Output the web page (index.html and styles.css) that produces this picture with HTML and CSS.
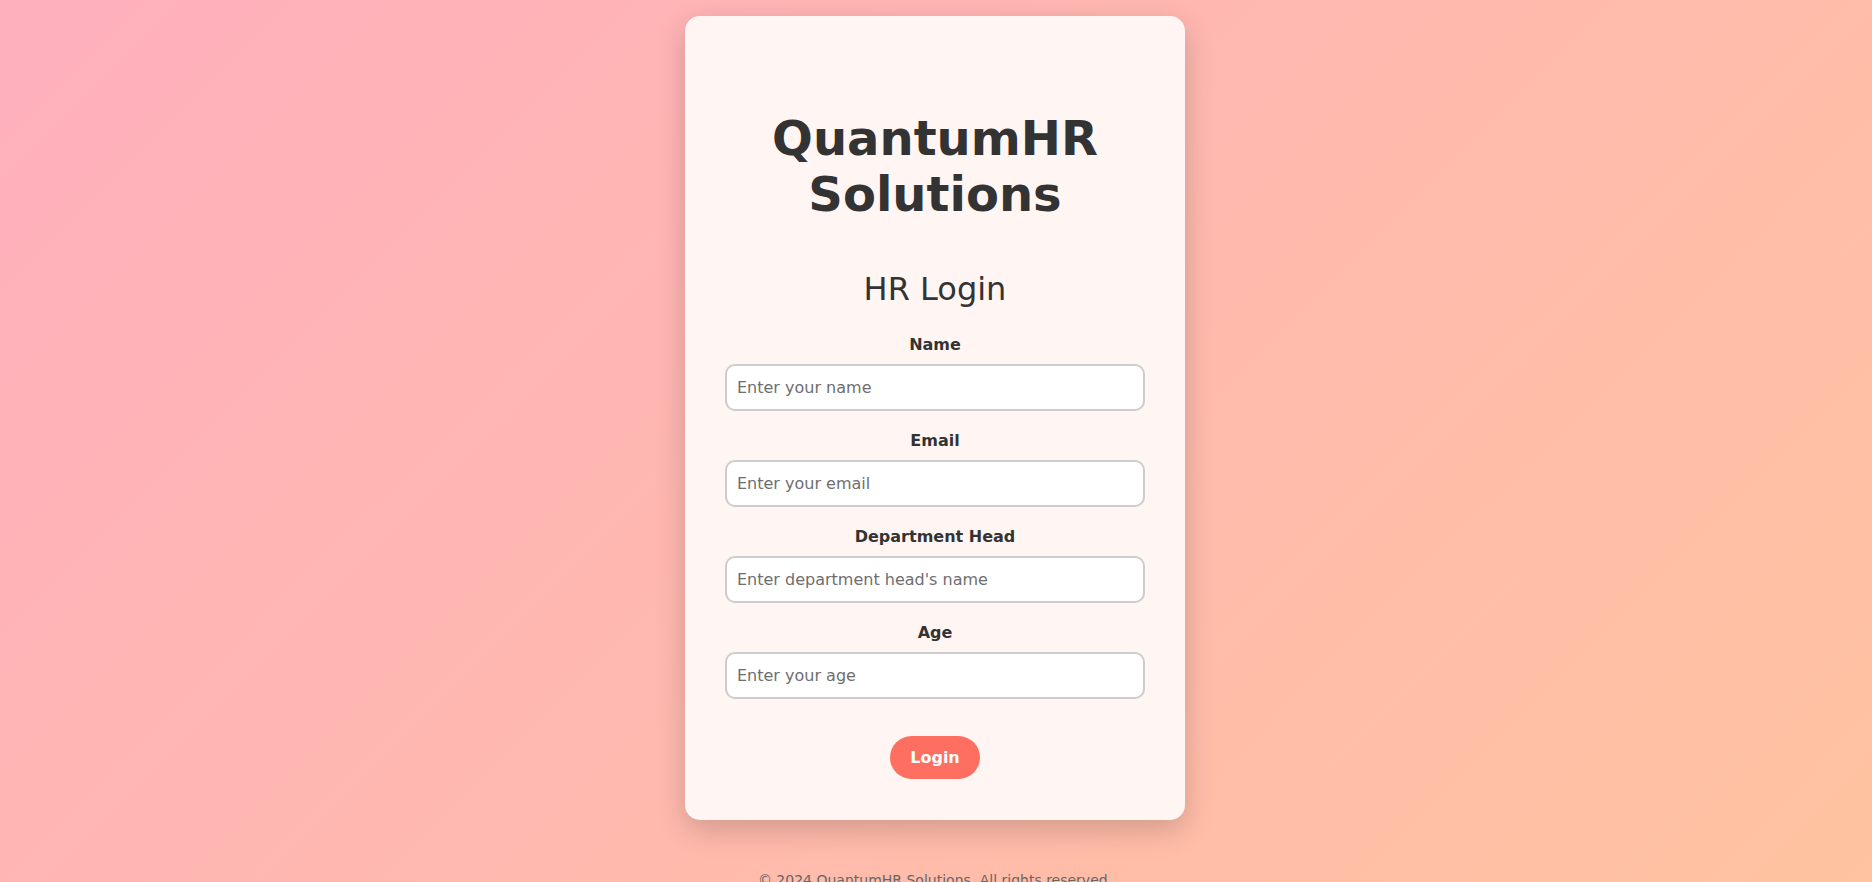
FILE: index.html
```html
<!DOCTYPE html>
<html lang="en">
<head>
<meta charset="utf-8">
<title>QuantumHR Solutions - HR Login</title>
<link rel="stylesheet" href="styles.css">
</head>
<body>
<main class="page">
  <section class="card">
    <h1 class="brand">QuantumHR Solutions</h1>
    <h2 class="form-title">HR Login</h2>
    <form class="login-form">
      <div class="field">
        <label class="field-label" for="name">Name</label>
        <input class="field-input" id="name" type="text" placeholder="Enter your name">
      </div>
      <div class="field">
        <label class="field-label" for="email">Email</label>
        <input class="field-input" id="email" type="email" placeholder="Enter your email">
      </div>
      <div class="field">
        <label class="field-label" for="head">Department Head</label>
        <input class="field-input" id="head" type="text" placeholder="Enter department head's name">
      </div>
      <div class="field">
        <label class="field-label" for="age">Age</label>
        <input class="field-input" id="age" type="number" placeholder="Enter your age">
      </div>
      <div class="actions">
        <button class="login-btn" type="button">Login</button>
      </div>
    </form>
  </section>
  <footer class="footer">© 2024 QuantumHR Solutions. All rights reserved.</footer>
</main>
</body>
</html>
```
FILE: styles.css
```css
* { box-sizing: border-box; }

html, body {
  margin: 0;
  padding: 0;
}

body {
  min-height: 100vh;
  font-family: "DejaVu Sans", Verdana, sans-serif;
  color: #333;
  background: linear-gradient(135deg, #ffafbd 0%, #ffc3a0 100%);
}

.page {
  display: flex;
  flex-direction: column;
  align-items: center;
  padding: 16px 2px 20px 0;
}

.card {
  width: 500px;
  padding: 40px 40px 41px;
  background: #fff6f4;
  border-radius: 15px;
  box-shadow: 0 10px 30px rgba(0, 0, 0, 0.18);
  text-align: center;
}

.brand {
  margin: 54px 0 48px;
  font-size: 48px;
  font-weight: bold;
  color: #333;
}

.form-title {
  margin: 0 0 27px;
  font-size: 32px;
  font-weight: normal;
  color: #333;
}

.login-form {
  display: flex;
  flex-direction: column;
}

.field {
  display: flex;
  flex-direction: column;
  margin-bottom: 20px;
}

.field-label {
  display: block;
  margin-bottom: 10px;
  font-size: 16px;
  font-weight: bold;
  color: #333;
}

.field-input {
  width: 100%;
  padding: 12px 10px;
  font-family: "DejaVu Sans", Verdana, sans-serif;
  font-size: 16px;
  border: 2px solid #ccc;
  border-radius: 10px;
  background: #fff;
  color: #333;
  outline: none;
}

.field-input::placeholder {
  color: #6e6e70;
}

.field-input::-webkit-outer-spin-button,
.field-input::-webkit-inner-spin-button {
  -webkit-appearance: none;
  margin: 0;
}

.field-input[type="number"] {
  -moz-appearance: textfield;
}

.actions {
  display: flex;
  justify-content: center;
  padding-top: 17px;
}

.login-btn {
  padding: 12px 20px;
  font-family: "DejaVu Sans", Verdana, sans-serif;
  font-size: 16px;
  font-weight: bold;
  color: #fff;
  background: #ff6f61;
  border: none;
  border-radius: 25px;
  cursor: pointer;
}

.footer {
  margin-top: 52px;
  font-size: 14px;
  color: #666;
  text-align: center;
}
```
